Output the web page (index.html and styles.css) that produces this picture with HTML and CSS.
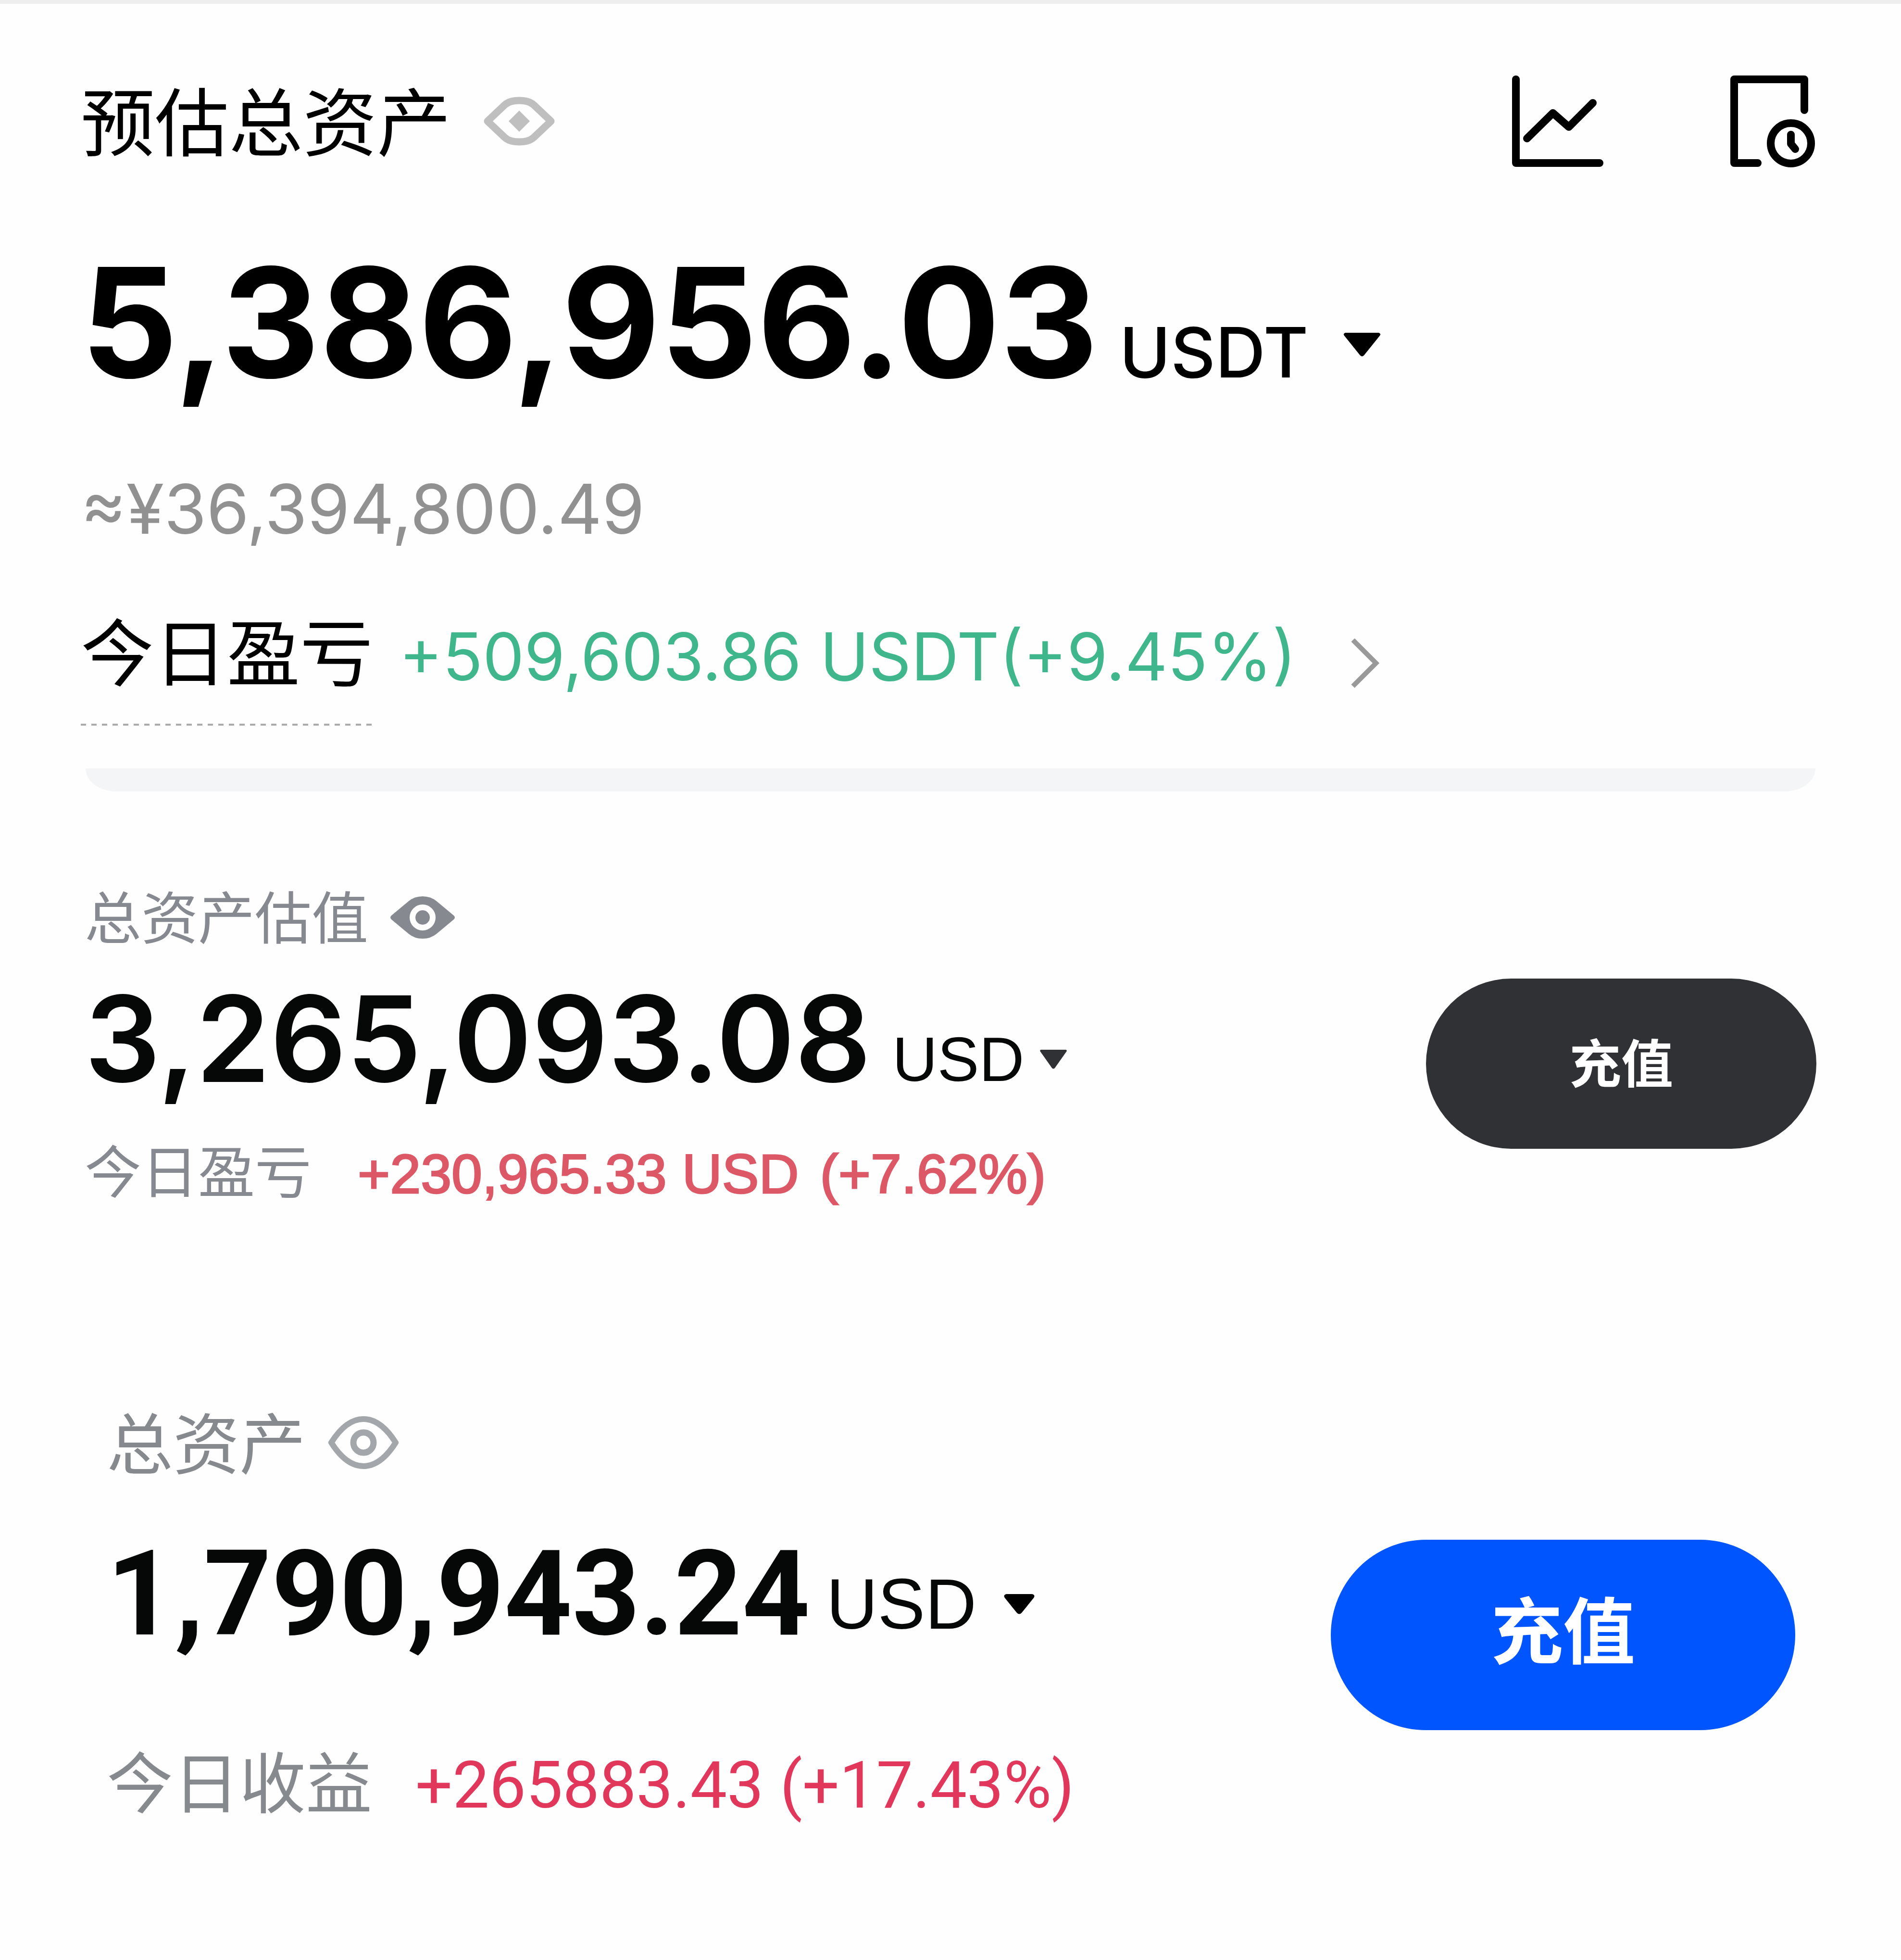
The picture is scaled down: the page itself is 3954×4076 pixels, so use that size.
FILE: index.html
```html
<!DOCTYPE html>
<html lang="zh-CN">
<head>
    <meta charset="UTF-8">
    <meta name="viewport" content="width=device-width, initial-scale=1.0">
    <title>总资产</title>
    <link rel="stylesheet" href="styles.css">
</head>
<body>
    <section class="account estimate">
        <div class="title-row">
            <h2 class="title">预估总资产</h2>
            <button type="button" class="icon-btn" aria-label="隐藏资产">
                <svg width="152" height="102" viewBox="0 0 152 102">
                    <path d="M10 51 L46 17 Q56 8 76 8 Q96 8 106 17 L142 51 L106 85 Q96 94 76 94 Q56 94 46 85 Z" fill="none" stroke="#bfbfbf" stroke-width="15" stroke-linejoin="round"/>
                    <path d="M76 29 L98 51 L76 73 L54 51 Z" fill="#bfbfbf"/>
                </svg>
            </button>
            <div class="tools">
                <button type="button" class="icon-btn" aria-label="资产走势">
                    <svg width="192" height="192" viewBox="0 0 192 192" fill="none" stroke="#000" stroke-width="16" stroke-linecap="round" stroke-linejoin="round">
                        <path d="M9 9 V183 H183"/>
                        <path d="M32 132 L86 79 L119 108 L169 58"/>
                    </svg>
                </button>
                <button type="button" class="icon-btn" aria-label="历史记录">
                    <svg width="178" height="192" viewBox="0 0 178 192" fill="none" stroke="#000" stroke-width="16" stroke-linecap="round" stroke-linejoin="round">
                        <path d="M58 183 H9 V9 H155 V73"/>
                        <circle cx="127" cy="142" r="42"/>
                        <path d="M127 124 V143 L136 154"/>
                    </svg>
                </button>
            </div>
        </div>

        <div class="amount-row">
            <span class="amount">5,386,956.03</span>
            <label class="currency">
                <select aria-label="币种">
                    <option>USDT</option>
                </select>
                <svg class="caret" width="78" height="50" viewBox="0 0 78 50"><path d="M4 0 H74 Q79 2 76 6 L43 47 Q39 51 35 47 L2 6 Q-1 2 4 0 Z" fill="#000"/></svg>
            </label>
        </div>

        <p class="fiat">≈¥36,394,800.49</p>

        <a class="profit" href="#">
            <span class="profit-label dashed">今日盈亏</span>
            <span class="profit-value">+509,603.86 USDT(+9.45%)</span>
            <svg class="chevron" width="62" height="108" viewBox="0 0 62 108"><path d="M6 6 L54 54 L6 102" fill="none" stroke="#999" stroke-width="10"/></svg>
        </a>

        <div class="card-edge"></div>
    </section>

    <section class="account valuation">
        <div class="title-row">
            <h2 class="title">总资产估值</h2>
            <button type="button" class="icon-btn" aria-label="隐藏资产">
                <svg width="134" height="88" viewBox="0 0 134 88">
                    <path d="M2 40 L38 10 Q50 0 67 0 Q84 0 96 10 L132 40 Q136 44 132 48 L96 78 Q84 88 67 88 Q50 88 38 78 L2 48 Q-2 44 2 40 Z" fill="#868a90"/>
                    <circle cx="67" cy="44" r="21" fill="none" stroke="#fefefe" stroke-width="12"/>
                </svg>
            </button>
        </div>
        <div class="content">
            <div>
                <div class="amount-row">
                    <span class="amount">3,265,093.08</span>
                    <label class="currency">
                        <select aria-label="币种">
                            <option>USD</option>
                        </select>
                        <svg class="caret" width="56" height="40" viewBox="0 0 56 40"><path d="M2 0 H54 Q57 1 55 4 L31 38 Q28 41 25 38 L1 4 Q-1 1 2 0 Z" fill="#303135"/></svg>
                    </label>
                </div>
                <p class="profit">
                    <span class="profit-label">今日盈亏</span>
                    <span class="profit-value">+230,965.33 USD <span class="percent">(+7.62%)</span></span>
                </p>
            </div>
            <button type="button" class="deposit">充值</button>
        </div>
    </section>

    <section class="account total">
        <div class="title-row">
            <h2 class="title">总资产</h2>
            <button type="button" class="icon-btn" aria-label="隐藏资产">
                <svg width="148" height="112" viewBox="0 0 148 112" fill="none" stroke="#a3a7ab">
                    <path d="M7 56 Q38 7 74 7 Q110 7 141 56 Q110 105 74 105 Q38 105 7 56 Z" stroke-width="12" stroke-linejoin="round"/>
                    <circle cx="74" cy="56" r="21" stroke-width="13"/>
                </svg>
            </button>
        </div>
        <div class="content">
            <div>
                <div class="amount-row">
                    <span class="amount">1,790,943.24</span>
                    <label class="currency">
                        <select aria-label="币种">
                            <option>USD</option>
                        </select>
                        <svg class="caret" width="64" height="42" viewBox="0 0 64 42"><path d="M5 0 H59 Q66 2 62 8 L37 39 Q32 44 27 39 L2 8 Q-2 2 5 0 Z" fill="#000"/></svg>
                    </label>
                </div>
                <p class="profit">
                    <span class="profit-label">今日收益</span>
                    <span class="profit-value">+265883.43 (+17.43%)</span>
                </p>
            </div>
            <button type="button" class="deposit">充值</button>
        </div>
    </section>
</body>
</html>
```

FILE: styles.css
```css
* {
    box-sizing: border-box;
}

body {
    margin: 0;
    border-top: 8px solid #eee;
    background-color: #fefefe;
    color: #000;
    font-family: "Liberation Sans", "Noto Sans CJK SC", sans-serif;
}

h2,
p {
    margin: 0;
    font-weight: 400;
}

svg {
    display: block;
    flex: none;
}

.icon-btn {
    padding: 0;
    border: none;
    background: none;
    cursor: pointer;
}

.title-row {
    display: flex;
    align-items: center;
}

.title {
    padding-bottom: 12px;
}

.title,
.profit-label,
.deposit {
    font-family: "Noto Sans CJK SC", sans-serif;
}

.tools {
    display: flex;
    gap: 262px;
    margin-left: auto;
}

.amount-row {
    display: flex;
    align-items: flex-end;
    white-space: nowrap;
}

.currency {
    display: flex;
    align-items: center;
}

.currency select {
    appearance: none;
    padding: 0;
    border: none;
    background: none;
    color: inherit;
    font: inherit;
}

.profit {
    display: flex;
    align-items: baseline;
    white-space: nowrap;
    text-decoration: none;
}

.content {
    display: flex;
    align-items: flex-start;
    justify-content: space-between;
}

.deposit {
    border: none;
    border-radius: 200px;
    color: #fff;
    font-weight: 700;
    cursor: pointer;
}

/* 预估总资产 */
.estimate {
    padding: 144px 178px 0 168px;
    font-family: Inter, "Noto Sans CJK SC", sans-serif;
}

.estimate .title-row {
    height: 200px;
    gap: 66px;
}

.estimate .title {
    font-size: 154px;
    line-height: 200px;
}

.estimate .amount-row {
    gap: 44px;
    margin-top: 158px;
}

.estimate .amount {
    font-size: 316px;
    font-weight: 700;
    line-height: 320px;
}

.estimate .currency {
    gap: 72px;
    font-size: 144px;
    font-weight: 500;
    line-height: 194px;
}

.estimate .caret {
    margin-bottom: 32px;
}

.fiat {
    margin-top: 158px;
    color: #919191;
    font-size: 143px;
    line-height: 140px;
}

.estimate .profit {
    margin-top: 121px;
}

.estimate .profit-label {
    color: #000;
    font-size: 152px;
    line-height: 200px;
}

.dashed {
    padding-bottom: 60px;
    background: repeating-linear-gradient(90deg, #aaa 0 11px, transparent 11px 22px) left bottom / 100% 4px no-repeat;
}

.estimate .profit-value {
    margin-left: 54px;
    color: #3fb68b;
    font-size: 137px;
    line-height: 200px;
}

.chevron {
    align-self: center;
    margin-left: 112px;
}

.card-edge {
    height: 48px;
    margin-top: 89px;
    margin-left: 10px;
    border-radius: 0 0 64px 64px / 0 0 48px 48px;
    background-color: #f4f5f7;
}

/* 总资产估值 */
.valuation {
    padding: 202px 176px 0;
    color: #060807;
}

.valuation .title-row {
    height: 120px;
    gap: 46px;
}

.valuation .title {
    color: #868a90;
    font-size: 118px;
    line-height: 120px;
}

.valuation .content {
    margin-top: 67px;
}

.valuation .amount-row {
    gap: 44px;
}

.valuation .amount {
    font-family: Inter, sans-serif;
    font-size: 248px;
    font-weight: 600;
    line-height: 250px;
}

.valuation .currency {
    gap: 32px;
    font-size: 130px;
    line-height: 164px;
}

.valuation .profit {
    margin-top: 85px;
}

.valuation .profit-label {
    color: #868a90;
    font-size: 118px;
    line-height: 120px;
}

.valuation .profit-value {
    margin-left: 96px;
    color: #dd5866;
    font-size: 115px;
    line-height: 120px;
    -webkit-text-stroke: 3px #dd5866;
}

.percent {
    margin-left: 12px;
}

.valuation .deposit {
    width: 812px;
    height: 354px;
    padding-bottom: 16px;
    background-color: #303135;
    font-size: 108px;
}

/* 总资产 */
.total {
    padding: 429px 220px 200px 222px;
    color: #060807;
}

.total .title-row {
    height: 140px;
    gap: 46px;
}

.total .title {
    color: #868a8e;
    font-size: 138px;
    line-height: 140px;
}

.total .content {
    margin-top: 120px;
}

.total .amount-row {
    gap: 34px;
}

.total .amount {
    font-family: Roboto, sans-serif;
    font-size: 246px;
    font-weight: 700;
    line-height: 250px;
}

.total .currency {
    gap: 56px;
    font-size: 148px;
    line-height: 208px;
}

.total .profit {
    margin-top: 189px;
}

.total .profit-label {
    color: #868a8e;
    font-size: 138px;
    line-height: 140px;
}

.total .profit-value {
    margin-left: 90px;
    color: #e0375b;
    font-family: Roboto, sans-serif;
    font-size: 136px;
    line-height: 140px;
}

.total .deposit {
    width: 966px;
    height: 396px;
    margin-top: 12px;
    padding-bottom: 36px;
    background-color: #05f;
    font-size: 150px;
}
```
